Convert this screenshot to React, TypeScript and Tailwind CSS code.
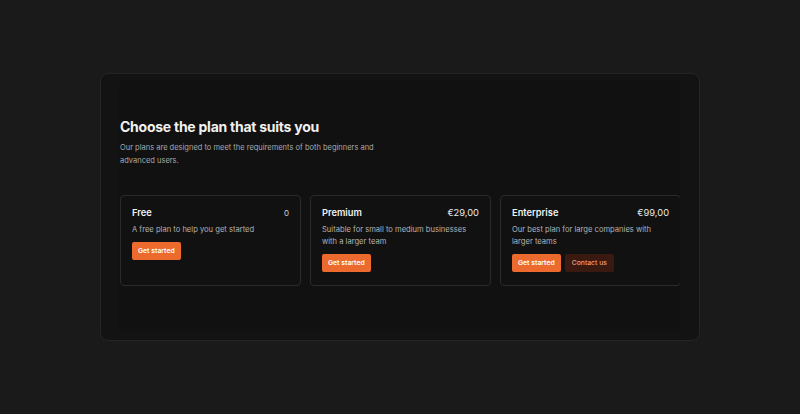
import React from 'react';

const plans = [
  { name: 'Free', price: '0', desc: 'A free plan to help you get started', contact: false },
  { name: 'Premium', price: '€29,00', desc: 'Suitable for small to medium businesses with a larger team', contact: false },
  { name: 'Enterprise', price: '€99,00', desc: 'Our best plan for large companies with larger teams', contact: true },
];

export default function App() {
  return (
    <div className="w-[800px] h-[414px] bg-[#1a1a1b] pt-[73px] pl-[100px]" style={{ fontFamily: 'Inter, "Noto Sans", sans-serif' }}>
      <div className="w-[600px] h-[268px] rounded-lg border border-[#252526] bg-[#131313] pl-[18px] pt-[7px] pb-[9px] pr-[19px] flex">
        <div className="flex-1 bg-[#111111] overflow-hidden pl-[1px] pt-[36px]">
          <h1 className="text-[14px] leading-[20px] font-bold text-[#f0f0f0] tracking-[-0.25px]">Choose the plan that suits you</h1>
          <p className="mt-[4px] w-[258px] text-[7.5px] leading-[13px] text-[#a9a9a9]">
            Our plans are designed to meet the requirements of both beginners and advanced users.
          </p>
          <div className="mt-[28px] flex gap-[9px]">
            {plans.map((p) => (
              <div key={p.name} className="w-[181px] shrink-0 h-[91px] rounded-[4px] border border-[#2a2a2a] px-[11px] pt-[11px]">
                <div className="flex items-center justify-between h-[12px]">
                  <span className="text-[9.3px] font-semibold text-[#f2f2f2]">{p.name}</span>
                  <span className={p.price === '0' ? 'text-[8px] text-[#d0d0d0]' : 'text-[9.3px] text-[#e8e8e8]'}>{p.price}</span>
                </div>
                <p className="mt-[5px] text-[7.6px] leading-[12px] text-[#b3b3b3]">{p.desc}</p>
                <div className="mt-[6px] flex gap-[4px]">
                  <button className="h-[18px] px-[6px] rounded-[2px] bg-[#ec6a2d] text-white text-[6.8px] font-semibold">Get started</button>
                  {p.contact && (
                    <button className="h-[18px] px-[7px] rounded-[2px] bg-[#3a1a10] text-[#ee9f7a] text-[6.8px] font-medium">Contact us</button>
                  )}
                </div>
              </div>
            ))}
          </div>
        </div>
      </div>
    </div>
  );
}
